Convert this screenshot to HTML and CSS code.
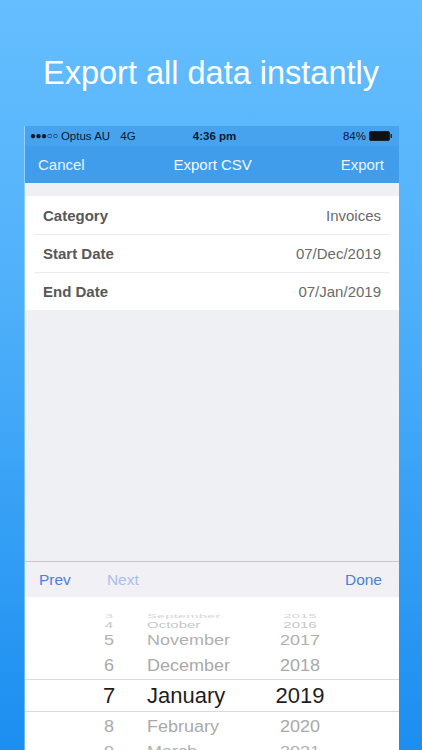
FILE: index.html
```html
<!DOCTYPE html>
<html lang="en">
<head>
    <meta charset="utf-8">
    <title>Export CSV</title>
    <link rel="stylesheet" href="styles.css">
</head>
<body>
<header class="promo">
    <h1>Export all data instantly</h1>
</header>
<div class="phone">
    <div class="statusbar">
        <span class="carrier"><span class="signal">&#9679;&#9679;&#9679;&#9675;&#9675;</span> Optus AU <span class="net">4G</span></span>
        <span class="clock">4:36 pm</span>
        <span class="battery">84%
            <svg width="24" height="10" viewBox="0 0 24 10">
                <rect x="0.5" y="0.5" width="20" height="9" rx="1.5" fill="#111" stroke="#222" />
                <rect x="21.5" y="3" width="1.5" height="4" fill="#222" />
            </svg>
        </span>
    </div>
    <nav class="navbar">
        <span class="nav-btn">Cancel</span>
        <span class="nav-title">Export CSV</span>
        <span class="nav-btn">Export</span>
    </nav>
    <div class="content">
        <ul class="table">
            <li class="cell"><b>Category</b><span>Invoices</span></li>
            <li class="cell"><b>Start Date</b><span>07/Dec/2019</span></li>
            <li class="cell"><b>End Date</b><span>07/Jan/2019</span></li>
        </ul>
    </div>
    <div class="toolbar">
        <span class="tool">Prev</span>
        <span class="tool disabled">Next</span>
        <span class="tool done">Done</span>
    </div>
    <div class="picker">
        <div class="wheel-row far3"><span>3</span><span>September</span><span>2015</span></div>
        <div class="wheel-row far2"><span>4</span><span>October</span><span>2016</span></div>
        <div class="wheel-row far1"><span>5</span><span>November</span><span>2017</span></div>
        <div class="wheel-row near"><span>6</span><span>December</span><span>2018</span></div>
        <div class="wheel-row current"><span>7</span><span>January</span><span>2019</span></div>
        <div class="wheel-row near"><span>8</span><span>February</span><span>2020</span></div>
        <div class="wheel-row far1"><span>9</span><span>March</span><span>2021</span></div>
    </div>
</div>
</body>
</html>
```

FILE: styles.css
```css
html, body {
    margin: 0;
    height: 100%;
}
body {
    width: 422px;
    height: 750px;
    overflow: hidden;
    background: linear-gradient(#65befe, #4fb0fa 40%, #1b8ef0);
    font-family: "Liberation Sans", Arial, sans-serif;
}
.promo {
    box-sizing: border-box;
    height: 126px;
    padding-top: 55px;
}
.promo h1 {
    margin: 0;
    font-size: 32.5px;
    line-height: 36px;
    font-weight: normal;
    color: #fff;
    text-align: center;
}
.phone {
    margin-left: 25px;
    width: 374px;
    height: 624px;
    background: #eff0f4;
    box-shadow: -1px 0 0 rgba(255,255,255,0.35);
    display: flex;
    flex-direction: column;
}
.statusbar {
    height: 20px;
    background: #48a3ee;
    display: grid;
    grid-template-columns: 1fr auto 1fr;
    align-items: center;
    padding: 0 6px 0 5px;
    font-size: 11.5px;
    color: #0b1a2b;
}
.signal {
    font-size: 10px;
    letter-spacing: -0.5px;
    vertical-align: 1px;
}
.net {
    margin-left: 7px;
}
.clock {
    font-weight: bold;
    margin-left: 6px;
}
.battery {
    display: flex;
    justify-content: flex-end;
    align-items: center;
    gap: 3px;
}
.navbar {
    height: 37px;
    background: #3f9deb;
    display: flex;
    justify-content: space-between;
    align-items: center;
    padding: 0 15px 0 13px;
    font-size: 15px;
    color: #eaf4fd;
}
.nav-title {
    color: #f4f9fe;
}
.content {
    flex: 1;
    padding-top: 13px;
}
.table {
    list-style: none;
    margin: 0;
    padding: 0;
    background: #fff;
}
.cell {
    height: 38px;
    margin: 0 9px;
    padding: 0 9px;
    display: flex;
    justify-content: space-between;
    align-items: center;
    font-size: 15px;
    border-top: 1px solid #ececee;
    box-sizing: border-box;
}
.cell:first-child {
    border-top-color: transparent;
}
.cell b {
    color: #585858;
}
.cell span {
    color: #6a6a6a;
}
.toolbar {
    height: 36px;
    box-sizing: border-box;
    border-top: 1px solid #c6c6cb;
    background: #f0f0f5;
    display: flex;
    align-items: center;
    padding: 0 17px 0 14px;
    font-size: 15.5px;
    color: #4a82d8;
}
.disabled {
    margin-left: 36px;
    color: #a8c0ea;
}
.done {
    margin-left: auto;
}
.picker {
    height: 153px;
    background: #fff;
    padding-top: 14px;
    box-sizing: border-box;
    overflow: hidden;
}
.wheel-row {
    display: grid;
    grid-template-columns: 60px 100px 90px;
    column-gap: 8px;
    padding-left: 54px;
    align-items: center;
    font-size: 18px;
    line-height: 20px;
    color: #a9a9a9;
}
.wheel-row span:first-child,
.wheel-row span:last-child {
    text-align: center;
}
.wheel-row.far3 {
    height: 6px;
    color: #d6d6d6;
    font-size: 15px;
    transform: scaleY(0.3);
}
.wheel-row.far2 {
    height: 12px;
    font-size: 15px;
    color: #c6c6c6;
    transform: scaleY(0.6);
}
.wheel-row.far1 {
    height: 22px;
    color: #b0b0b0;
    transform: scaleY(0.82);
}
.wheel-row.near {
    height: 28px;
    transform: scaleY(0.95);
}
.wheel-row.current {
    height: 31px;
    border-top: 1px solid #dadada;
    border-bottom: 1px solid #dadada;
    font-size: 22px;
    line-height: 26px;
    color: #1e1e1e;
}
```
